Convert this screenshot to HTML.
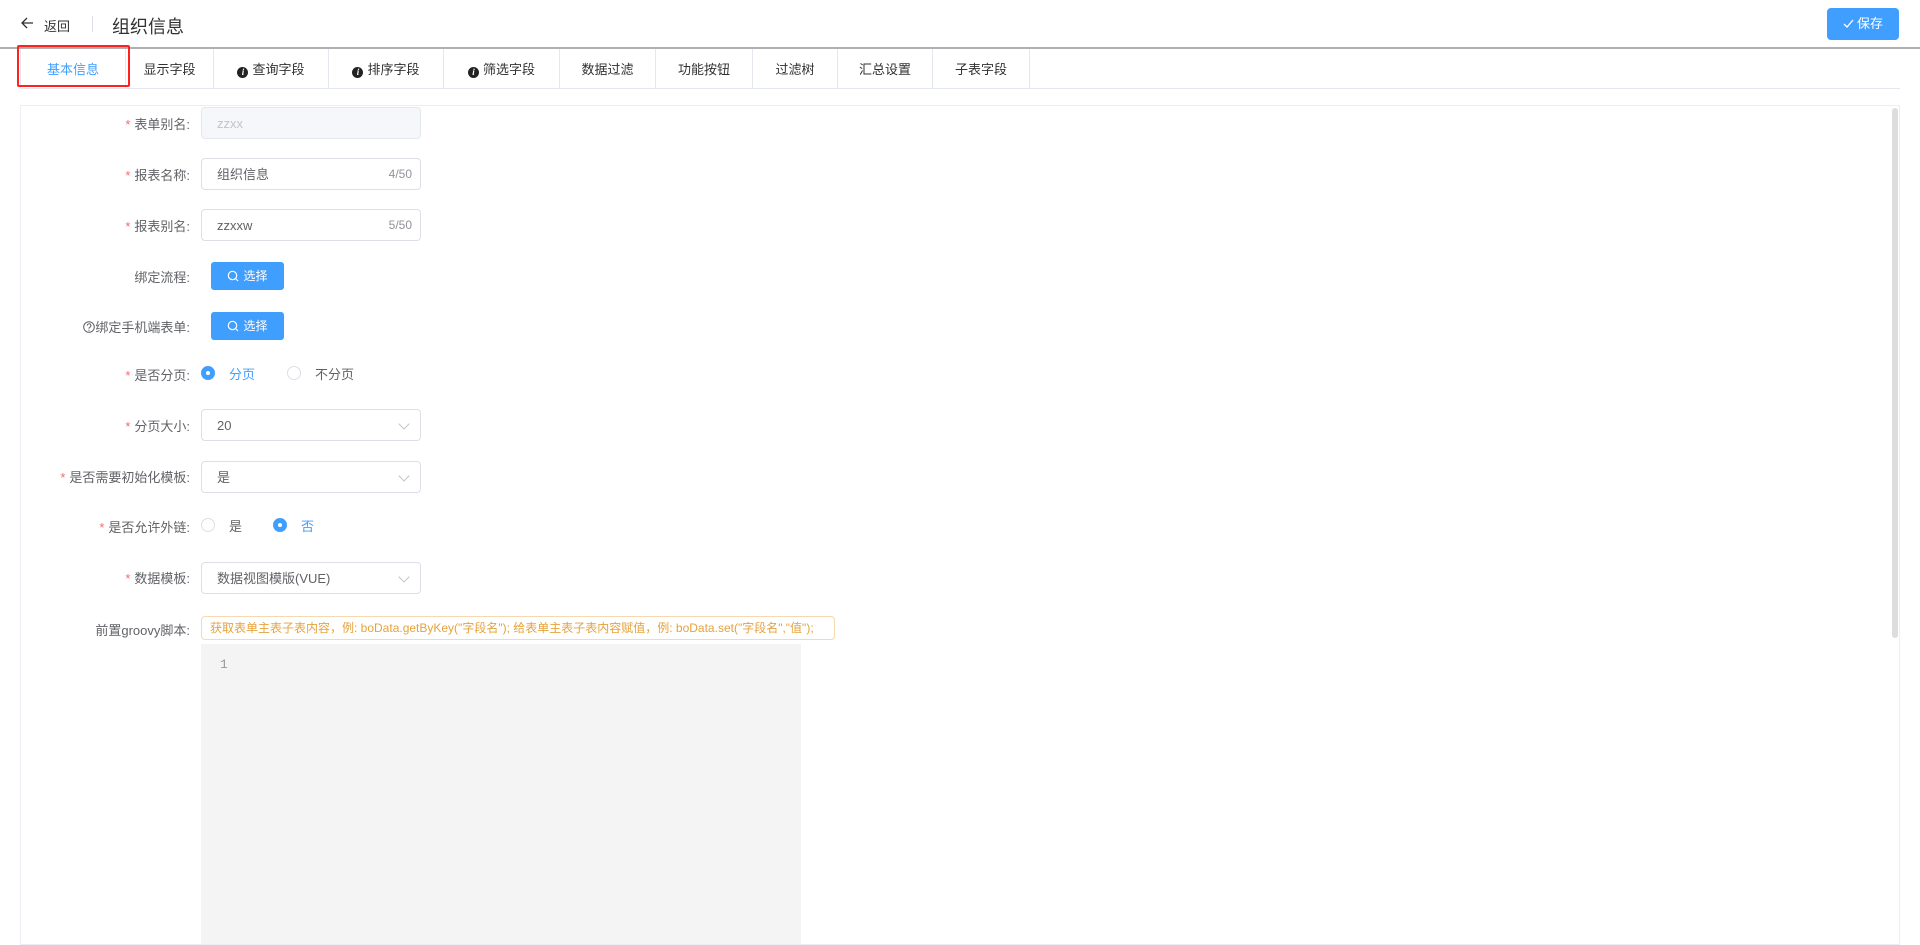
<!DOCTYPE html>
<html><head><meta charset="utf-8"><style>
*{box-sizing:border-box;margin:0;padding:0}
body{width:1920px;height:937px;overflow:hidden;background:#fff;font-family:"Liberation Sans","Noto Sans CJK SC",sans-serif;color:#606266;font-size:13px;position:relative}
.abs{position:absolute}
.hdr-line{left:0;top:47px;width:1920px;height:2px;background:#b0b0b0}
.tab{position:absolute;top:49px;height:39px;border-right:1px solid #e4e7ed;text-align:center;line-height:42px;font-size:13px;color:#303133}
.tabline{left:20px;top:88px;width:1880px;height:1px;background:#e4e7ed}
.panel{left:20px;top:105px;width:1880px;height:840px;border:1px solid #ebeef5}
.lbl{position:absolute;right:1730px;font-size:13px;color:#606266;white-space:nowrap;text-align:right}
.req{color:#f56c6c;margin-right:4px}
.inp{position:absolute;left:201px;width:220px;height:32px;border:1px solid #dcdfe6;border-radius:4px;font-size:13px;color:#606266;line-height:31px;padding-left:15px}
.cnt{position:absolute;right:8px;top:0;color:#909399;font-size:12px}
.btn{position:absolute;left:211px;width:73px;height:28px;background:#409eff;border-radius:3px;color:#fff;font-size:12px;line-height:28px;text-align:center}
.btn svg{vertical-align:-2px;margin-right:4px}
.arr{position:absolute;right:12px;top:10px;width:8px;height:8px;border-right:1px solid #c0c4cc;border-bottom:1px solid #c0c4cc;transform:rotate(45deg)}
.radio{position:absolute;width:14px;height:14px;border-radius:50%;border:1px solid #dcdfe6;background:#fff}
.radio.on{background:#409eff;border-color:#409eff}
.radio.on:after{content:"";position:absolute;left:4px;top:4px;width:4px;height:4px;border-radius:50%;background:#fff}
.rt{position:absolute;font-size:13px}
.i{display:inline-block;width:11px;height:11px;border-radius:50%;background:#222;color:#fff;font-size:9px;line-height:11px;font-style:italic;font-weight:bold;vertical-align:-1px;margin-right:4px;font-family:"Liberation Serif",serif}
</style></head><body>
<svg class="abs" style="left:20px;top:16px" width="14" height="14" viewBox="0 0 14 14"><path d="M13 7H2M7 2L2 7l5 5" fill="none" stroke="#303133" stroke-width="1.3"/></svg>
<div class="abs" style="left:44px;top:16px;font-size:13px;color:#303133">返回</div>
<div class="abs" style="left:92px;top:16px;width:1px;height:16px;background:#dcdfe6"></div>
<div class="abs" style="left:112px;top:13px;font-size:18px;color:#303133">组织信息</div>
<div class="abs" style="left:1827px;top:8px;width:72px;height:32px;background:#409eff;border-radius:4px;color:#fff;font-size:13px;line-height:32px;text-align:center"><svg width="11" height="11" viewBox="0 0 11 11" style="vertical-align:-1px;margin-right:3px"><path d="M1 6l3 3 6-7" fill="none" stroke="#fff" stroke-width="1.3"/></svg>保存</div>
<div class="abs hdr-line"></div>

<div class="tab" style="left:20px;width:106px;color:#409eff;border-left:1px solid #e4e7ed">基本信息</div>
<div class="tab" style="left:126px;width:88px">显示字段</div>
<div class="tab" style="left:214px;width:115px"><span class="i">i</span>查询字段</div>
<div class="tab" style="left:329px;width:115px"><span class="i">i</span>排序字段</div>
<div class="tab" style="left:444px;width:116px"><span class="i">i</span>筛选字段</div>
<div class="tab" style="left:560px;width:96px">数据过滤</div>
<div class="tab" style="left:656px;width:97px">功能按钮</div>
<div class="tab" style="left:753px;width:85px">过滤树</div>
<div class="tab" style="left:838px;width:95px">汇总设置</div>
<div class="tab" style="left:933px;width:97px">子表字段</div>
<div class="abs tabline"></div>
<div class="abs" style="left:17px;top:45px;width:113px;height:42px;border:2px solid #ff2020;border-radius:2px"></div>

<div class="abs panel"></div>
<div class="abs" style="left:1892px;top:108px;width:6px;height:530px;background:#ddd;border-radius:3px"></div>

<div class="lbl" style="top:114px"><span class="req">*</span>表单别名:</div>
<div class="inp" style="top:107px;background:#f5f7fa;border-color:#e4e7ed;color:#c0c4cc">zzxx</div>

<div class="lbl" style="top:165px"><span class="req">*</span>报表名称:</div>
<div class="inp" style="top:158px">组织信息<span class="cnt">4/50</span></div>

<div class="lbl" style="top:216px"><span class="req">*</span>报表别名:</div>
<div class="inp" style="top:209px">zzxxw<span class="cnt">5/50</span></div>

<div class="lbl" style="top:267px">绑定流程:</div>
<div class="btn" style="top:262px"><svg width="12" height="12" viewBox="0 0 12 12"><circle cx="5.5" cy="5.5" r="4.2" fill="none" stroke="#fff" stroke-width="1.2"/><path d="M8.5 8.5l2.5 2.5" stroke="#fff" stroke-width="1.2"/></svg>选择</div>

<div class="lbl" style="top:317px"><svg width="12" height="12" viewBox="0 0 12 12" style="vertical-align:-1px"><circle cx="6" cy="6" r="5.3" fill="none" stroke="#606266" stroke-width="1"/><path d="M4.3 4.6a1.8 1.8 0 1 1 2.4 1.7c-.5.2-.7.5-.7 1v.4" fill="none" stroke="#606266" stroke-width="1"/><circle cx="6" cy="9.2" r=".6" fill="#606266"/></svg>绑定手机端表单:</div>
<div class="btn" style="top:312px"><svg width="12" height="12" viewBox="0 0 12 12"><circle cx="5.5" cy="5.5" r="4.2" fill="none" stroke="#fff" stroke-width="1.2"/><path d="M8.5 8.5l2.5 2.5" stroke="#fff" stroke-width="1.2"/></svg>选择</div>

<div class="lbl" style="top:365px"><span class="req">*</span>是否分页:</div>
<div class="radio on" style="left:201px;top:366px"></div><div class="rt" style="left:229px;top:364px;color:#409eff">分页</div>
<div class="radio" style="left:287px;top:366px"></div><div class="rt" style="left:315px;top:364px;color:#606266">不分页</div>

<div class="lbl" style="top:416px"><span class="req">*</span>分页大小:</div>
<div class="inp" style="top:409px">20<span class="arr"></span></div>

<div class="lbl" style="top:467px"><span class="req">*</span>是否需要初始化模板:</div>
<div class="inp" style="top:461px">是<span class="arr"></span></div>

<div class="lbl" style="top:517px"><span class="req">*</span>是否允许外链:</div>
<div class="radio" style="left:201px;top:518px"></div><div class="rt" style="left:229px;top:516px">是</div>
<div class="radio on" style="left:273px;top:518px"></div><div class="rt" style="left:301px;top:516px;color:#409eff">否</div>

<div class="lbl" style="top:568px"><span class="req">*</span>数据模板:</div>
<div class="inp" style="top:562px">数据视图模版(VUE)<span class="arr"></span></div>

<div class="lbl" style="top:620px">前置groovy脚本:</div>
<div class="abs" style="left:201px;top:616px;width:634px;height:24px;border:1px solid #f5dab1;border-radius:4px;color:#e6a23c;font-size:12px;line-height:22px;padding-left:8px;white-space:nowrap">获取表单主表子表内容，例: boData.getByKey("字段名"); 给表单主表子表内容赋值，例: boData.set("字段名","值");</div>
<div class="abs" style="left:201px;top:644px;width:600px;height:300px;background:#f4f4f4"></div>
<div class="abs" style="left:220px;top:657px;color:#999;font-size:13px;font-family:'Liberation Mono',monospace">1</div>
</body></html>
